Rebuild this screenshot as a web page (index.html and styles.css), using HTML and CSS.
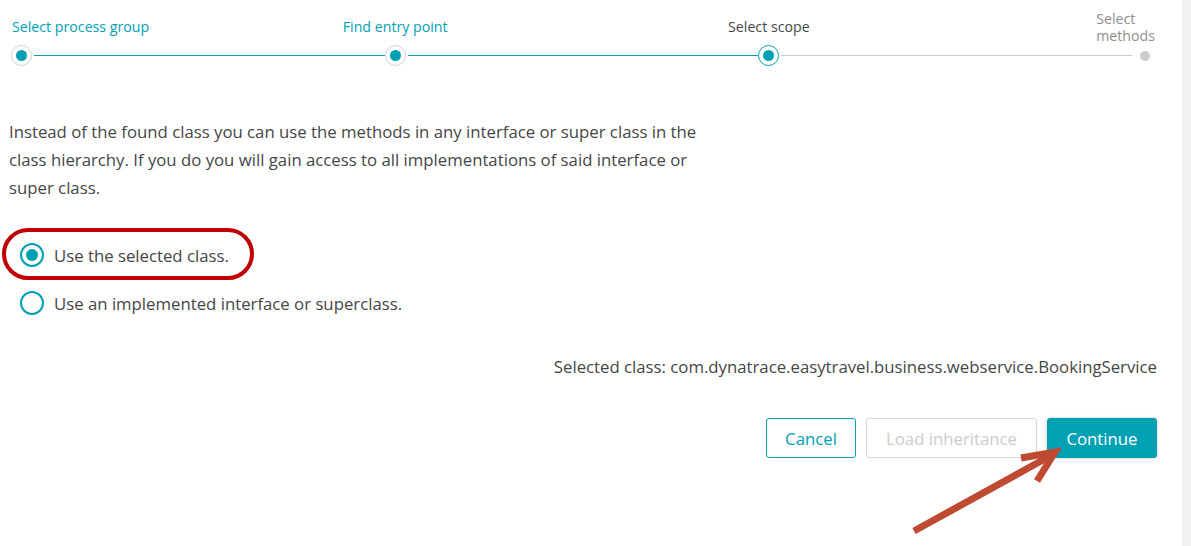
FILE: index.html
```html
<!DOCTYPE html>
<html lang="en">
<head>
<meta charset="utf-8">
<title>Select scope</title>
<link rel="stylesheet" href="styles.css">
</head>
<body>
<div class="page">
  <main class="main">
    <div class="stepper">
      <div class="step step-first">
        <div class="step-label done">Select process group</div>
        <div class="dot dot-done"></div>
      </div>
      <div class="line line-done"></div>
      <div class="step">
        <div class="step-label done">Find entry point</div>
        <div class="dot dot-done"></div>
      </div>
      <div class="line line-done"></div>
      <div class="step">
        <div class="step-label current">Select scope</div>
        <div class="dot dot-current"></div>
      </div>
      <div class="line line-todo"></div>
      <div class="step step-last">
        <div class="step-label todo">Select<br>methods</div>
        <div class="dot-wrap"><div class="dot-todo"></div></div>
      </div>
    </div>

    <p class="intro">Instead of the found class you can use the methods in any interface or super class in the class hierarchy. If you do you will gain access to all implementations of said interface or super class.</p>

    <div class="options">
      <label class="option option-marked">
        <span class="radio radio-on"></span>
        <span class="option-text">Use the selected class.</span>
        <span class="highlight"></span>
      </label>
      <label class="option">
        <span class="radio"></span>
        <span class="option-text">Use an implemented interface or superclass.</span>
      </label>
    </div>

    <div class="selected">Selected class: com.dynatrace.easytravel.business.webservice.BookingService</div>

    <div class="actions">
      <button class="btn btn-cancel">Cancel</button>
      <button class="btn btn-disabled">Load inheritance</button>
      <button class="btn btn-primary">Continue</button>
    </div>

    <svg class="arrow" width="1191" height="546" viewBox="0 0 1191 546">
      <g stroke="#bd4a31" stroke-width="7" fill="none" stroke-linecap="butt" stroke-linejoin="miter">
        <line x1="914" y1="531" x2="1052" y2="455"/>
        <polyline points="1021,458 1055,452 1037,481"/>
      </g>
    </svg>
  </main>
  <div class="scroll-strip"></div>
</div>
</body>
</html>
```

FILE: styles.css
```css
html, body {
  margin: 0;
  padding: 0;
  background: #ffffff;
}

body {
  font-family: "Open Sans", "Liberation Sans", sans-serif;
  color: #454646;
  font-size: 16.75px;
}

.page {
  display: flex;
  width: 1191px;
  height: 546px;
  overflow: hidden;
}

.main {
  position: relative;
  flex: 1;
  padding: 8px 25px 0 0;
}

.scroll-strip {
  width: 9px;
  background: #f2f2f2;
}

/* Stepper */
.stepper {
  display: flex;
  align-items: flex-end;
  margin-left: 11px;
  margin-right: 2px;
}

.step {
  width: 21px;
  display: flex;
  flex-direction: column;
  align-items: center;
}

.step-label {
  height: 37px;
  display: flex;
  align-items: center;
  white-space: nowrap;
  font-size: 14.2px;
  line-height: 17px;
}

.step-first .step-label {
  align-self: flex-start;
  margin-left: 1px;
}

.step-last .step-label {
  align-self: flex-end;
  margin-right: 0;
}

.done { color: #00a1b2; }
.current { color: #454646; }
.todo { color: #8f8f8f; }

.dot {
  box-sizing: border-box;
  width: 21px;
  height: 21px;
  border-radius: 50%;
  border: 1px solid #cfcfcf;
  display: flex;
  align-items: center;
  justify-content: center;
}

.dot::after {
  content: "";
  width: 11px;
  height: 11px;
  border-radius: 50%;
  background: #00a1b2;
}

.dot-current {
  border-color: #00a1b2;
}

.dot-wrap {
  width: 21px;
  height: 21px;
  display: flex;
  align-items: center;
  justify-content: center;
}

.dot-todo {
  width: 10px;
  height: 10px;
  border-radius: 50%;
  background: #cccccc;
}

.line {
  flex: 1;
  height: 1px;
  margin: 0 0 10px 2px;
}

.line-done { background: #00a1b2; }
.line-todo { background: #cccccc; margin-right: 2px; }

/* Intro */
.intro {
  margin: 52px 0 0 9px;
  width: 718px;
  line-height: 28px;
}

/* Options */
.options {
  margin-top: 29px;
  display: flex;
  flex-direction: column;
}

.option {
  position: relative;
  display: flex;
  align-items: center;
  height: 48px;
  padding-left: 20px;
  align-self: flex-start;
}

.radio {
  box-sizing: border-box;
  width: 24px;
  height: 24px;
  border-radius: 50%;
  border: 2px solid #00a1b2;
  display: flex;
  align-items: center;
  justify-content: center;
  margin-right: 10px;
}

.radio-on::after {
  content: "";
  width: 12px;
  height: 12px;
  border-radius: 50%;
  background: #00a1b2;
}

.highlight {
  position: absolute;
  left: 2px;
  top: -3px;
  width: 252px;
  height: 52px;
  box-sizing: border-box;
  border: 4px solid #c00000;
  border-radius: 26px;
}

/* Selected class */
.selected {
  margin-top: 30px;
  text-align: right;
  line-height: 20px;
}

/* Buttons */
.actions {
  margin-top: 41px;
  display: flex;
  justify-content: flex-end;
  gap: 10px;
}

.btn {
  box-sizing: border-box;
  height: 40px;
  border-radius: 3px;
  font-family: "Open Sans", "Liberation Sans", sans-serif;
  font-size: 16.75px;
  padding: 0;
  background: #ffffff;
  border: 1px solid #cccccc;
  cursor: pointer;
}

.btn-cancel {
  width: 90px;
  color: #00a1b2;
  border-color: #00a1b2;
}

.btn-disabled {
  width: 171px;
  color: #cccccc;
  border-color: #d6d6d6;
}

.btn-primary {
  width: 110px;
  color: #ffffff;
  background: #00a1b2;
  border-color: #00a1b2;
  box-shadow: 0 0 3px rgba(0, 0, 0, 0.25);
}

.arrow {
  position: absolute;
  left: 0;
  top: 0;
  pointer-events: none;
}
```
